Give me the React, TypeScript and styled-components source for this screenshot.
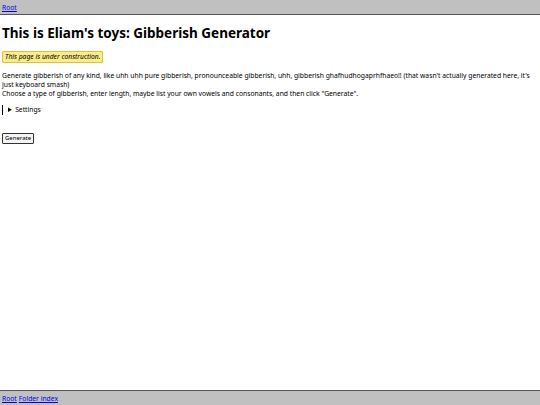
import React from "react";
import styled, { createGlobalStyle } from "styled-components";

const Global = createGlobalStyle`
  html, body { margin: 0; padding: 0; height: 100%; }
  body {
    font-family: "Noto Sans", "Open Sans", sans-serif;
    font-size: 6.75px;
    line-height: normal;
    color: #000;
    background: #fff;
  }
  #root { min-height: 100%; }
`;

const Page = styled.div`
  display: flex;
  flex-direction: column;
  min-height: 405px;
`;

const Bar = styled.nav<{ $bottom?: boolean }>`
  background: #c0c0c0;
  padding: 0 2px;
  height: 15px;
  box-sizing: border-box;
  display: flex;
  align-items: center;
  gap: 2px;
  ${(p) => (p.$bottom ? "border-top: 1px solid #555;" : "border-bottom: 1px solid #555;")}
`;

const Link = styled.a`
  color: #0000ee;
  text-decoration: underline;
`;

const Main = styled.main`
  flex: 1;
  padding: 0 2px;
`;

const Title = styled.h1`
  font-size: 13.5px;
  font-weight: 700;
  margin: 9px 0 9px;
  line-height: normal;
`;

const Notice = styled.div`
  display: inline-block;
  background: #f8ec8c;
  border: 1px solid #d8c440;
  border-radius: 2px;
  padding: 0 2px;
  line-height: 10px;
  font-style: italic;
  box-shadow: 0 0 1px #e0d060;
`;

const Para = styled.p`
  margin: 8px 0 0;
`;

const Details = styled.details`
  margin-top: 7px;
  border-left: 1px solid #000;
  padding-left: 5px;
`;

const Summary = styled.summary`
  cursor: pointer;
  line-height: 10px;
`;

const Button = styled.button`
  margin-top: 18px;
  font-family: "Noto Sans", sans-serif;
  font-size: 6px;
  line-height: 7px;
  padding: 1px 2px;
  border: 1px solid #333;
  border-radius: 1px;
  background: #f4f4f4;
  color: #000;
`;

export default function App() {
  return (
    <Page>
      <Global />
      <Bar>
        <Link href="#">Root</Link>
      </Bar>
      <Main>
        <Title>This is Eliam's toys: Gibberish Generator</Title>
        <Notice>This page is under construction.</Notice>
        <Para>
          Generate gibberish of any kind, like uhh uhh pure gibberish, pronounceable gibberish, uhh,
          gibberish ghafhudhogaprhfhaeo!! (that wasn't actually generated here, it's just keyboard
          smash)
          <br />
          Choose a type of gibberish, enter length, maybe list your own vowels and consonants, and then
          click "Generate".
        </Para>
        <Details>
          <Summary>Settings</Summary>
        </Details>
        <div>
          <Button>Generate</Button>
        </div>
      </Main>
      <Bar $bottom>
        <Link href="#">Root</Link>
        <Link href="#">Folder index</Link>
      </Bar>
    </Page>
  );
}
